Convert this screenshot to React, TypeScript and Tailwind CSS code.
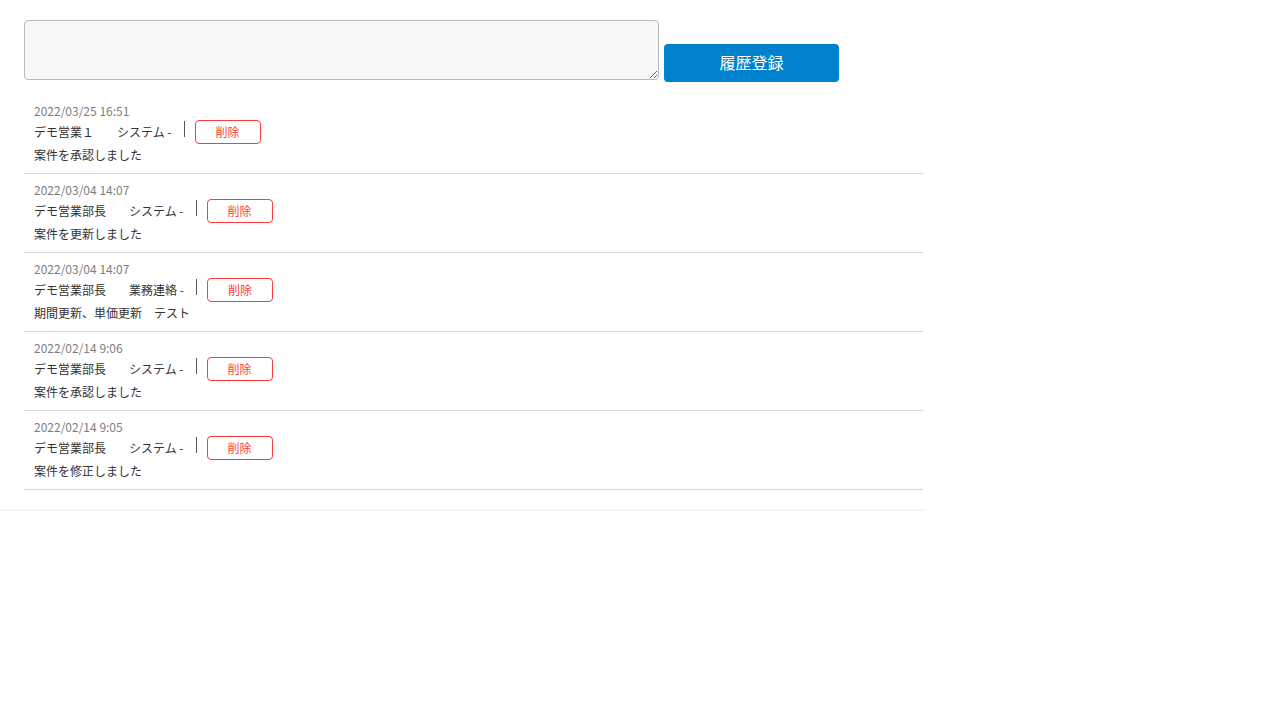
import React, { useState } from 'react'

type Entry = {
    date: string
    user: string
    kind: string
    body: string
}

const entries: Entry[] = [
    { date: '2022/03/25 16:51', user: 'デモ営業１', kind: 'システム', body: '案件を承認しました' },
    { date: '2022/03/04 14:07', user: 'デモ営業部長', kind: 'システム', body: '案件を更新しました' },
    { date: '2022/03/04 14:07', user: 'デモ営業部長', kind: '業務連絡', body: '期間更新、単価更新　テスト' },
    { date: '2022/02/14 9:06', user: 'デモ営業部長', kind: 'システム', body: '案件を承認しました' },
    { date: '2022/02/14 9:05', user: 'デモ営業部長', kind: 'システム', body: '案件を修正しました' },
]

export default function App() {
    const [memo, setMemo] = useState('')

    return (
        <div className="min-h-screen bg-white font-['Noto_Sans_CJK_JP','Noto_Sans',sans-serif] text-[#333]">
            <div className="w-[923px] pl-6 pt-5 pb-[19px] border-b-2 border-[#f3f3f3]">
                {/* 入力欄 */}
                <div className="flex items-start gap-[5px]">
                    <textarea
                        value={memo}
                        onChange={(e) => setMemo(e.target.value)}
                        className="w-[635px] h-[60px] rounded border border-[#b9b9b9] bg-[#f8f8f8] px-2 py-1 text-sm outline-none"
                    />
                    <button
                        type="button"
                        className="mt-6 w-[175px] h-[38px] pb-[3px] rounded bg-[#0082cc] text-white text-base leading-none"
                    >
                        履歴登録
                    </button>
                </div>

                {/* 履歴一覧 */}
                <ul className="mt-[13px]">
                    {entries.map((e, i) => (
                        <li key={i} className="px-[10px] pt-[6px] pb-[7px] border-b border-[#d6d6d6]">
                            <div className="text-xs leading-[19px] text-[#7d7d7d]">{e.date}</div>
                            <div className="flex items-start h-6 text-xs">
                                <span className="leading-6">{e.user}</span>
                                <span className="ml-[23px] leading-6">{e.kind} -</span>
                                <span className="ml-[12px] mt-px h-4 border-l border-[#555]" />
                                <button
                                    type="button"
                                    className="ml-[10px] w-[66px] h-6 rounded border border-[#ff3b3b] text-[#ff3b3b] text-xs leading-none"
                                >
                                    削除
                                </button>
                            </div>
                            <div className="text-xs leading-[22px]">{e.body}</div>
                        </li>
                    ))}
                </ul>
            </div>
        </div>
    )
}
